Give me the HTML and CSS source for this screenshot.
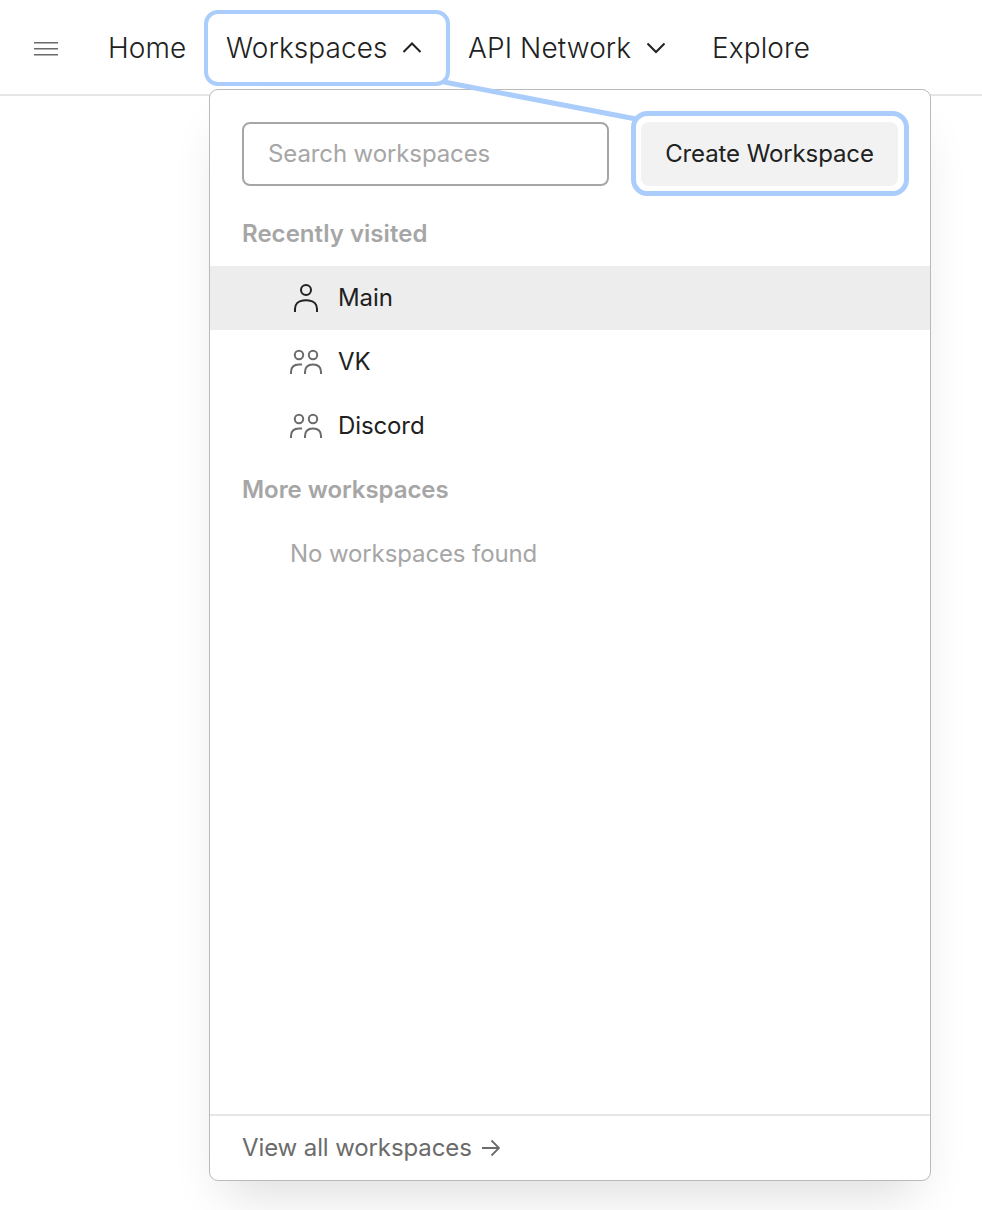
FILE: index.html
```html
<!DOCTYPE html>
<html lang="en">
<head>
<meta charset="utf-8">
<title>Workspaces</title>
<link rel="stylesheet" href="styles.css">
</head>
<body>
<div class="page">
  <header class="topbar">
    <svg class="menu-icon" width="24" height="16" viewBox="0 0 24 16"><path d="M0 1.75h24M0 7.750h24M0 13.750h24"/></svg>
    <nav class="nav">
      <a class="nav-item home"><span>Home</span></a>
      <a class="nav-item workspaces"><span>Workspaces</span><svg class="chevron" width="20" height="12" viewBox="0 0 20 12"><path d="M1.500 10L10 1.500l8.500 8.500"/></svg></a>
      <a class="nav-item network"><span>API Network</span><svg class="chevron" width="20" height="12" viewBox="0 0 20 12"><path d="M1.500 1.500L10 10l8.500-8.500"/></svg></a>
      <a class="nav-item explore"><span>Explore</span></a>
    </nav>
  </header>

  <section class="panel">
    <div class="tools">
      <div class="search"><span>Search workspaces</span></div>
      <div class="create"><span>Create Workspace</span></div>
    </div>
    <h2 class="heading recent"><span>Recently visited</span></h2>
    <div class="row active">
      <svg class="icon dark" width="32" height="32" viewBox="0 0 32 32"><circle cx="16" cy="8" r="5"/><path d="M5 30v-3c0-5 3.500-8 8-8.500q3-.4 6 0c4.500.5 8 3.500 8 8.500v3"/></svg>
      <span>Main</span>
    </div>
    <div class="row">
      <svg class="icon" width="32" height="32" viewBox="0 0 32 32"><circle cx="9" cy="9" r="4.200"/><circle cx="23" cy="9" r="4.200"/><path d="M1 28v-2c0-5 3-7.500 8-7.500h3M15 28v-2c0-5 3-7.500 8-7.500s8 2.500 8 7.500v2"/></svg>
      <span>VK</span>
    </div>
    <div class="row">
      <svg class="icon" width="32" height="32" viewBox="0 0 32 32"><circle cx="9" cy="9" r="4.200"/><circle cx="23" cy="9" r="4.200"/><path d="M1 28v-2c0-5 3-7.500 8-7.500h3M15 28v-2c0-5 3-7.500 8-7.500s8 2.500 8 7.500v2"/></svg>
      <span>Discord</span>
    </div>
    <h2 class="heading more"><span>More workspaces</span></h2>
    <div class="row empty"><span>No workspaces found</span></div>
    <footer class="footer">
      <span>View all workspaces</span>
      <svg class="arrow" width="18" height="18" viewBox="0 0 18 18"><path d="M0 9h17M9.500 1.500L17 9l-7.500 7.500"/></svg>
    </footer>
  </section>

  <svg class="annotation" width="982" height="1210" viewBox="0 0 982 1210">
    <rect x="206" y="12" width="242" height="72" rx="12" stroke-width="4"/>
    <path d="M444 82L636 119" stroke-width="5"/>
    <rect x="633.500" y="113.500" width="273" height="80" rx="14" stroke-width="5"/>
  </svg>
</div>
</body>
</html>
```

FILE: styles.css
```css
* { box-sizing: border-box; }
body {
  margin: 0;
  background: #fff;
  color: #212121;
  font-family: Inter, "Liberation Sans", sans-serif;
}
.page {
  position: relative;
  width: 982px;
  height: 1210px;
  overflow: hidden;
}
.topbar {
  display: flex;
  align-items: center;
  height: 96px;
  padding: 2px 0 0 34px;
  border-bottom: 2px solid #e6e6e6;
}
.menu-icon { fill: none; stroke: #6b6b6b; stroke-width: 1.5; margin: 2px 50px 0 0; }
.nav { display: flex; font-size: 28px; line-height: 40px; font-weight: 300; letter-spacing: .1px; white-space: nowrap; }
.nav-item { display: flex; align-items: center; justify-content: space-between; }
.home { width: 78px; margin-right: 40px; }
.workspaces { width: 196px; margin-right: 46px; }
.network { width: 198px; margin-right: 46px; }
.chevron { fill: none; stroke: #212121; stroke-width: 2; }
.panel {
  display: flex;
  flex-direction: column;
  width: 722px;
  height: 1092px;
  margin: -7px 0 0 209px;
  position: relative;
  background: #fff;
  border: 1px solid #bababa;
  border-radius: 9px;
  box-shadow: 0 28px 48px -16px rgba(0, 0, 0, .14);
  font-size: 24px;
  line-height: 32px;
  font-weight: 400;
  letter-spacing: -.11px;
  white-space: nowrap;
}
.tools { display: flex; gap: 32px; padding: 32px 32px 0; margin-bottom: 16px; }
.search {
  width: 367px;
  height: 64px;
  padding: 14px 24px;
  border: 2px solid #a6a6a6;
  border-radius: 8px;
  color: #a6a6a6;
}
.create {
  display: flex;
  align-items: center;
  justify-content: center;
  width: 257px;
  height: 64px;
  border-radius: 8px;
  background: #f2f2f2;
}
.heading {
  margin: 0;
  height: 64px;
  padding: 16px 32px;
  color: #a6a6a6;
  font-size: 24px;
  line-height: 32px;
  font-weight: 600;
}
.recent { letter-spacing: .04px; }
.more { letter-spacing: -.06px; }
.row { display: flex; align-items: center; gap: 16px; height: 64px; padding: 0 80px; }
.active { background: #ededed; }
.empty { color: #a6a6a6; }
.icon { fill: none; stroke: #6b6b6b; stroke-width: 2; }
.dark { stroke: #212121; }
.footer {
  display: flex;
  align-items: center;
  gap: 10px;
  height: 66px;
  margin-top: auto;
  padding: 0 32px;
  border-top: 2px solid #e6e6e6;
  color: #6b6b6b;
}
.arrow { fill: none; stroke: #6b6b6b; stroke-width: 1.8; }
.annotation { position: absolute; left: 0; top: 0; fill: none; stroke: #abcdfb; }
```
